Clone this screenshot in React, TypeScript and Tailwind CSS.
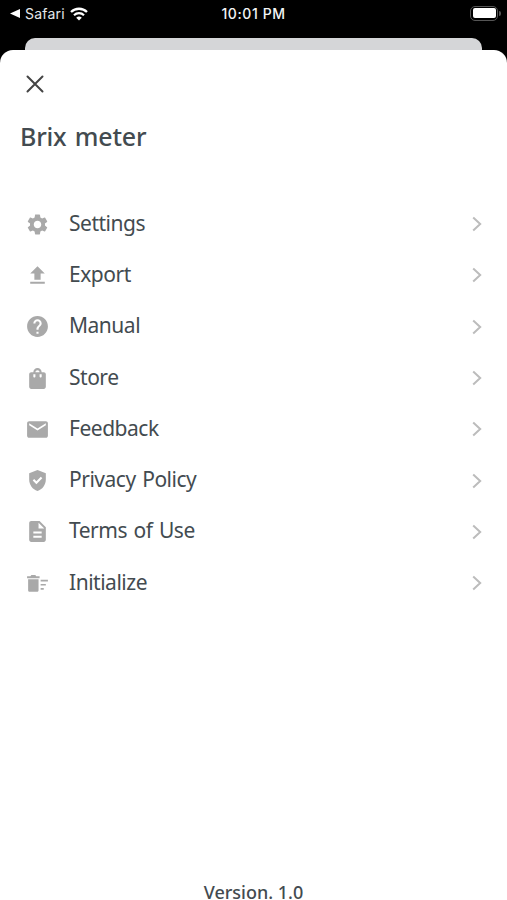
import type { IconType } from "react-icons";
import {
    MdDescription,
    MdEmail,
    MdGppGood,
    MdHelp,
    MdSettings,
    MdShoppingBag,
} from "react-icons/md";

function UploadIcon({ className }: { className?: string }) {
    return (
        <svg viewBox="0 0 24 24" fill="currentColor" className={className}>
            <path d="M9 16h6v-6h4l-7-7-7 7h4v6zm-4 2h14v2H5v-2z" />
        </svg>
    );
}

// Trash can with three thin, shortening lines on its right
function SweepIcon({ className }: { className?: string }) {
    return (
        <svg viewBox="0 0 24 24" fill="currentColor" className={className}>
            <path d="M3 8h10v10.4c0 .9-.7 1.6-1.6 1.6H4.6c-.9 0-1.6-.7-1.6-1.6zM14 5v2H2V5h3.2l.9-1.2h3.8l.9 1.2z" />
            <path d="M15 8.4h7V10h-7zM15 12.4h5V14h-5zM15 16.4h3V18h-3z" />
        </svg>
    );
}

interface MenuItem {
    label: string;
    icon: IconType | typeof UploadIcon;
}

const menuItems: MenuItem[] = [
    { label: "Settings", icon: MdSettings },
    { label: "Export", icon: UploadIcon },
    { label: "Manual", icon: MdHelp },
    { label: "Store", icon: MdShoppingBag },
    { label: "Feedback", icon: MdEmail },
    { label: "Privacy Policy", icon: MdGppGood },
    { label: "Terms of Use", icon: MdDescription },
    { label: "Initialize", icon: SweepIcon },
];

function StatusBar() {
    return (
        <div className="grid h-[38px] grid-cols-3 items-start font-['Inter'] text-white">
            <div className="flex h-[27px] items-center pl-[10px]">
                <svg viewBox="0 0 10 9" fill="currentColor" className="h-[9px] w-[10px]">
                    <path d="M0 4.5 10 0v9z" />
                </svg>
                <span className="ml-[5px] text-[14px] tracking-[0.2px] text-gray-200">Safari</span>
                <svg viewBox="0 0 18 14" fill="none" className="ml-[5px] h-[14px] w-[18px]">
                    <path d="M1 5a11.5 11.5 0 0 1 16 0" stroke="currentColor" strokeWidth="2.3" />
                    <path d="M4 8.2a7.2 7.2 0 0 1 10 0" stroke="currentColor" strokeWidth="2.2" />
                    <path d="M9 13.6 6.2 10.8a4 4 0 0 1 5.6 0z" fill="currentColor" />
                </svg>
            </div>
            <div className="flex h-[27px] items-center justify-center text-[14px] font-medium tracking-[0.6px] text-gray-100">10:01 PM</div>
            <div className="flex h-[26px] items-center justify-end pr-[6px]">
                <div className="h-[15px] w-7 rounded-[5px] border border-[#555] p-[1.5px]">
                    <div className="h-full w-full rounded-[2px] bg-white" />
                </div>
                <div className="ml-px h-[5px] w-[2px] rounded-r-full bg-[#555]" />
            </div>
        </div>
    );
}

export default function App() {
    return (
        <div className="flex h-[900px] w-[507px] flex-col overflow-hidden bg-black font-['Noto_Sans',sans-serif] text-[#434b50]">
            <StatusBar />

            {/* Edge of the screen behind the sheet */}
            <div className="mx-[25px] h-3 shrink-0 rounded-t-[10px] bg-[#d5d6d8]" />

            <main className="flex flex-1 flex-col rounded-t-[13px] bg-white">
                <button type="button" aria-label="Close" className="mt-[25px] ml-[26px] h-[18px] w-[18px]">
                    <svg viewBox="0 0 18 18" fill="none" stroke="#444" strokeWidth="2" strokeLinecap="round">
                        <path d="m1.5 1.5 15 15M16.5 1.5l-15 15" />
                    </svg>
                </button>

                <h1 className="mt-[25px] ml-[20px] text-[25px] leading-9 font-medium tracking-[-0.2px] [word-spacing:2px]">Brix meter</h1>

                <nav className="mt-[43px]">
                    {menuItems.map(({ label, icon: Icon }) => (
                        <button
                            key={label}
                            type="button"
                            className="flex h-[51.3px] w-full items-center pr-[25px] pl-[25px] text-left"
                        >
                            <Icon className="mt-[3px] h-[25px] w-[25px] text-[#a9a9a9]" />
                            <span className="ml-[19px] flex-1 text-[21px] leading-7 tracking-[-0.48px] [word-spacing:1.5px]">{label}</span>
                            <svg viewBox="0 0 10 16" fill="none" stroke="#bcbcbc" strokeWidth="2" className="mt-[3px] h-4 w-[10px]">
                                <path d="m1.2 1.5 7 6.5-7 6.5" />
                            </svg>
                        </button>
                    ))}
                </nav>

                <p className="mt-auto text-center text-[18px] leading-4 font-medium">Version. 1.0</p>
            </main>
        </div>
    );
}
